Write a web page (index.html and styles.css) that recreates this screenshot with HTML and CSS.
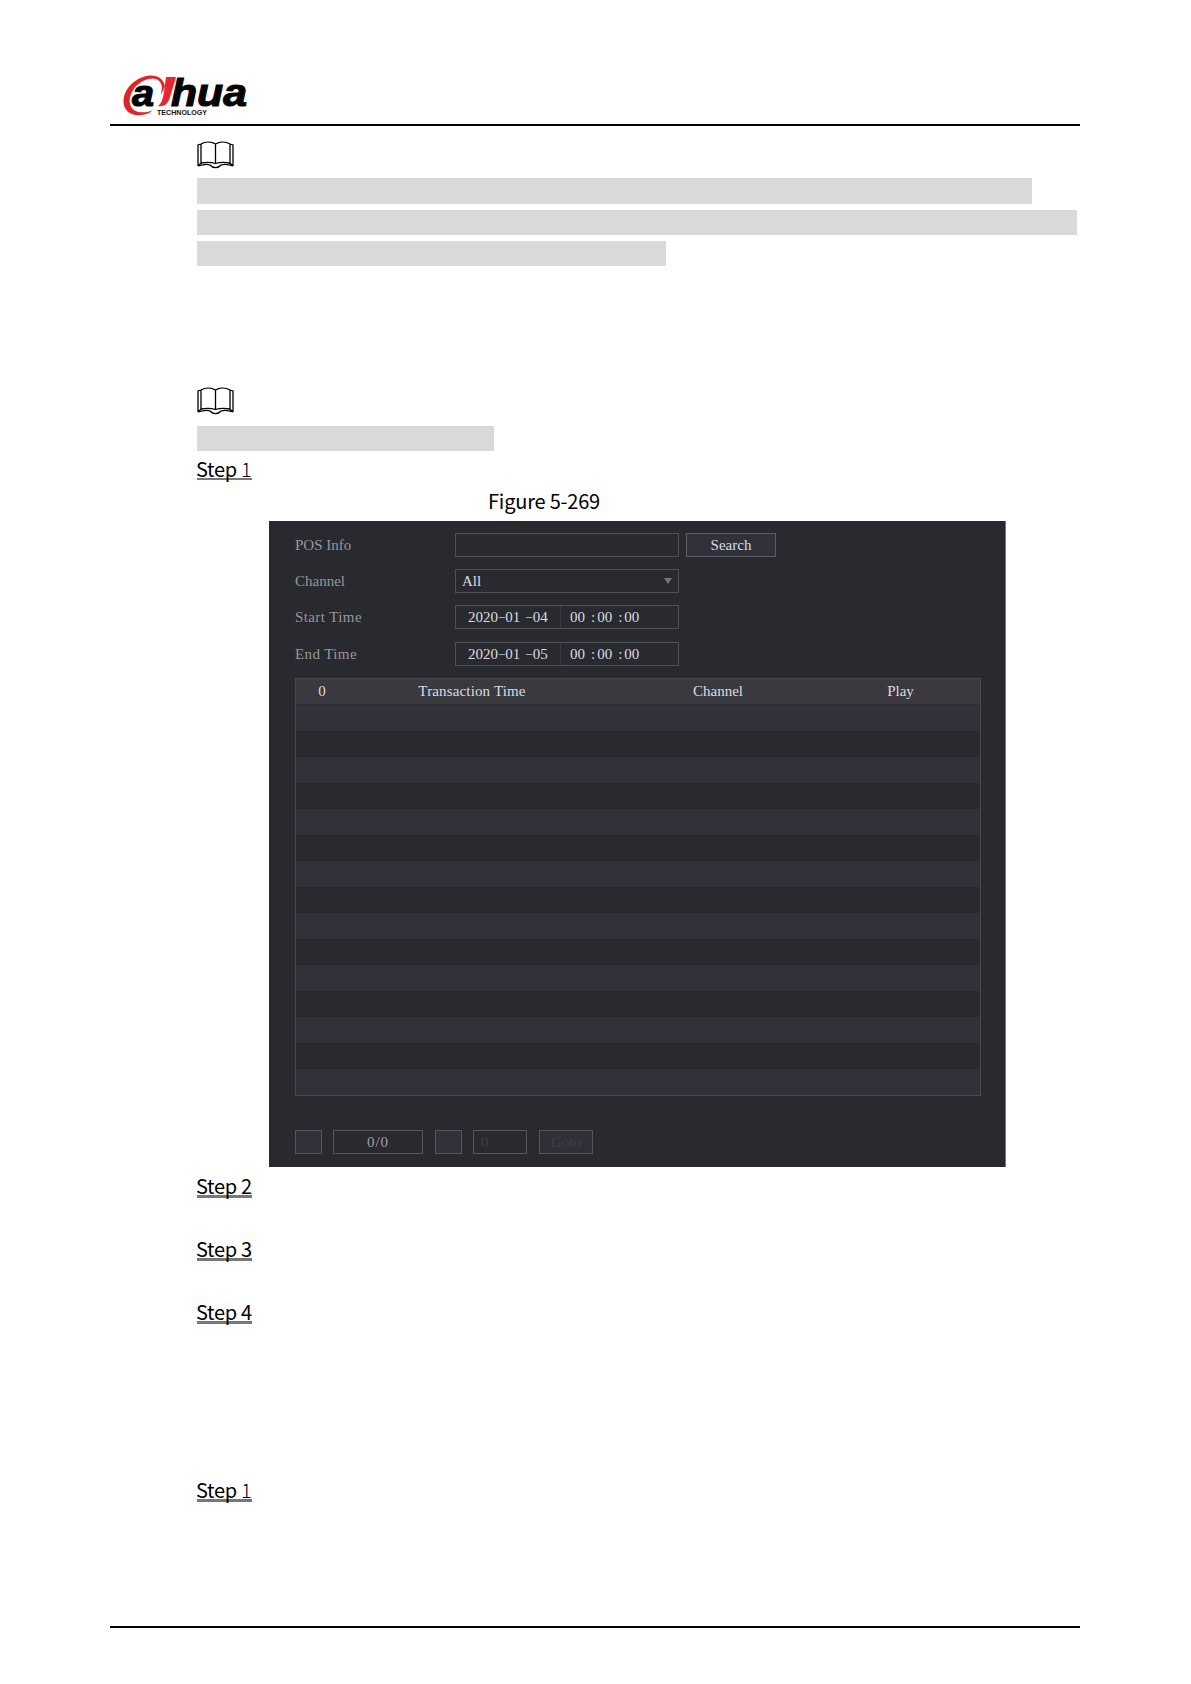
FILE: index.html
```
<!DOCTYPE html>
<html lang="en">
<head>
    <meta charset="UTF-8">
    <meta name="viewport" content="width=device-width, initial-scale=1.0">
    <title>POS Search</title>
    <link rel="stylesheet" href="styles.css">
</head>
<body>

    <header class="page-header">
        <svg class="logo" width="134" height="46" viewBox="0 0 134 46">
            <path d="M43 14 C41 5 32 1 21 5 C9 9 1 20 1.500 30 C2 40 10 44 19 43 C24 42.500 28 41 30.500 38.500 C21 42 10 41 8 32 C6 21 15 10 26 7 C34 5 39 8 40 15 L39 23 Z" fill="#e02229"/>
            <path d="M44 5 H54 L48 25 C46 32 42 35 36 34 C40 31 41 26 42 20 Z" fill="#e8262c"/>
            <text class="logo-a" x="10" y="33.500" textLength="22" lengthAdjust="spacingAndGlyphs">a</text>
            <text class="logo-hua" x="49" y="33.500" textLength="76" lengthAdjust="spacingAndGlyphs">hua</text>
            <text class="logo-sub" x="35" y="43" textLength="50" lengthAdjust="spacingAndGlyphs">TECHNOLOGY</text>
        </svg>
    </header>

    <main class="content">
        <svg class="book" width="37" height="28" viewBox="0 0 37 28">
            <path d="M1 25 V4 L4 3 C9 0 15 1 18.500 3 C22 1 28 0 33 3 L36 4 V25 M4 3 V23 M18.500 3 V22 M33 3 V23 M1 25 L4 22 C9 21 14 21 18.500 22.500 C23 21 28 21 33 22 L36 25 M1 25 C7 23 11 23 13 24 C16 27.500 21 27.500 24 24 C27 23 31 23 36 25"/>
        </svg>
        <div class="note-lines">
            <div class="bar bar-first"></div>
            <div class="bar bar-full"></div>
            <div class="bar bar-half"></div>
        </div>

        <svg class="book book-second" width="37" height="28" viewBox="0 0 37 28">
            <path d="M1 25 V4 L4 3 C9 0 15 1 18.500 3 C22 1 28 0 33 3 L36 4 V25 M4 3 V23 M18.500 3 V22 M33 3 V23 M1 25 L4 22 C9 21 14 21 18.500 22.500 C23 21 28 21 33 22 L36 25 M1 25 C7 23 11 23 13 24 C16 27.500 21 27.500 24 24 C27 23 31 23 36 25"/>
        </svg>
        <div class="bar bar-short"></div>

        <div class="step"><span>Step <i>1</i></span></div>
        <div class="figure-title">Figure 5-269</div>

        <!-- POS search window -->
        <section class="panel">
            <div class="row">
                <label>POS Info</label>
                <div class="field"></div>
                <div class="search-btn">Search</div>
            </div>
            <div class="row">
                <label>Channel</label>
                <div class="field select">All
                    <svg width="8" height="6" viewBox="0 0 8 6"><path d="M0 0H8L4 6Z" fill="#74757b"/></svg>
                </div>
            </div>
            <div class="row">
                <label class="wide">Start Time</label>
                <div class="field time">
                    <span class="date">2020<b>−</b>01<b class="gap">−</b>04</span>
                    <span class="clock">00<b>:</b>00<b>:</b>00</span>
                </div>
            </div>
            <div class="row">
                <label class="wide">End Time</label>
                <div class="field time">
                    <span class="date">2020<b>−</b>01<b class="gap">−</b>05</span>
                    <span class="clock">00<b>:</b>00<b>:</b>00</span>
                </div>
            </div>

            <div class="table">
                <div class="table-head">
                    <span class="col-num">0</span>
                    <span class="col-time">Transaction Time</span>
                    <span class="col-channel">Channel</span>
                    <span class="col-play">Play</span>
                </div>
                <div class="table-body">
                    <div></div><div></div><div></div><div></div><div></div>
                    <div></div><div></div><div></div><div></div><div></div>
                    <div></div><div></div><div></div><div></div><div></div>
                </div>
            </div>

            <div class="pager">
                <div class="box small"></div>
                <div class="box count">0/0</div>
                <div class="box small next"></div>
                <div class="box page">0</div>
                <div class="box go">Goto</div>
            </div>
        </section>

        <div class="steps">
            <div class="step"><span>Step 2</span></div>
            <div class="step"><span>Step 3</span></div>
            <div class="step"><span>Step 4</span></div>
            <div class="step step-next"><span>Step <i>1</i></span></div>
        </div>
    </main>

    <footer class="page-footer"></footer>

</body>
</html>
```
FILE: styles.css
```
* {
    box-sizing: border-box;
}

body {
    margin: 0;
    width: 1191px;
    height: 1684px;
    background: #fff;
    color: #000;
    font-family: "Noto Sans CJK SC", "Open Sans", sans-serif;
    overflow: hidden;
    display: flex;
    flex-direction: column;
}

.page-header {
    margin: 0 111px 0 110px;
    height: 126px;
    padding: 72px 0 0 12px;
    border-bottom: 2px solid #000;
}

.logo {
    display: block;
    overflow: visible;
}

.logo-a, .logo-hua {
    font: italic bold 37px "Liberation Sans", Arial, sans-serif;
    fill: #050505;
    stroke: #050505;
    stroke-width: 1.2px;
}

.logo-hua {
    font-size: 39px;
}

.logo-sub {
    font: bold 6.5px "Liberation Sans", Arial, sans-serif;
    fill: #111;
}

.content {
    margin-left: 197px;
    padding-top: 15px;
    flex: 1;
}

.book {
    display: block;
    fill: none;
    stroke: #000;
    stroke-width: 1.3px;
}

.book-second {
    margin: 121px 0 11px;
}

.bar {
    height: 25px;
    background: #d9d9d9;
}

.note-lines {
    display: flex;
    flex-direction: column;
    gap: 6px;
    margin-top: 9px;
}

.bar-first {
    width: 835px;
    height: 26px;
}

.bar-full {
    width: 880px;
}

.bar-half {
    width: 469px;
}

.bar-short {
    width: 297px;
}

.step {
    height: 30px;
    font-size: 20px;
    line-height: 30px;
    letter-spacing: -0.3px;
    margin-top: 3px;
}

.step span {
    display: block;
    width: 55px;
    height: 26px;
    white-space: nowrap;
    text-indent: -1px;
    border-bottom: 2px solid #777;
}

.step i {
    font-style: normal;
    font-weight: 300;
}

.figure-title {
    margin: 2px 0 5px 291px;
    font-size: 20px;
    line-height: 30px;
    letter-spacing: -0.2px;
}

/* panel */
.panel {
    width: 737px;
    height: 646px;
    margin-left: 72px;
    padding: 12px 24px 0 26px;
    background: #292a2f;
    border-right: 1px solid #77787a;
    color: #dcdce0;
    font: 15px/25px "Liberation Serif", "Times New Roman", serif;
}

.row {
    display: flex;
    height: 24px;
    margin-bottom: 12px;
}

.row label {
    width: 160px;
    color: #96979c;
}

.row label.wide {
    letter-spacing: 0.4px;
}

.field {
    width: 224px;
    border: 1px solid #505157;
    line-height: 23px;
}

.select {
    display: flex;
    justify-content: space-between;
    align-items: center;
    padding: 0 6px;
}

.search-btn {
    width: 90px;
    margin-left: 7px;
    border: 1px solid #5c5c69;
    background: #31313b;
    line-height: 23px;
    text-align: center;
}

.row:nth-child(3) {
    margin-bottom: 13px;
}

.time {
    display: flex;
}

.time b {
    font-weight: normal;
}

.date {
    width: 105px;
    padding-left: 12px;
    border-right: 1px solid #3b3c42;
    white-space: nowrap;
}

.date b {
    font-size: 13px;
}

.date .gap {
    margin-left: 5px;
}

.clock {
    padding-left: 9px;
}

.clock b {
    margin: 0 2px 0 6px;
}

.table {
    height: 418px;
    border: 1px solid #494a50;
    display: flex;
    flex-direction: column;
}

.table-head {
    display: flex;
    height: 26px;
    background: #39393f;
    border-bottom: 1px solid #2c2c32;
    line-height: 25px;
    text-align: center;
}

.col-num {
    width: 52px;
}

.col-time {
    width: 248px;
    letter-spacing: 0.15px;
}

.col-channel {
    width: 244px;
}

.col-play {
    width: 121px;
}

.table-body {
    flex: 1;
    display: flex;
    flex-direction: column;
}

.table-body div {
    flex: 1;
}

.table-body div:nth-child(odd) {
    background: #313139;
}

.pager {
    display: flex;
    margin-top: 34px;
}

.box {
    height: 24px;
    border: 1px solid #55565c;
    line-height: 23px;
    text-align: center;
}

.small {
    width: 27px;
    background: #31313b;
}

.count {
    width: 90px;
    margin: 0 12px 0 11px;
    color: #a0a0a5;
    letter-spacing: 1px;
}

.page {
    width: 54px;
    margin: 0 12px 0 11px;
    padding-left: 7px;
    text-align: left;
    color: #3d3e43;
}

.go {
    width: 54px;
    background: #2f3037;
    color: #3d3e44;
}

.steps .step {
    margin: 4px 0 33px;
}

.steps .step span {
    height: 27px;
    border-bottom-width: 3px;
}

.steps .step-next {
    margin-top: 148px;
}

.page-footer {
    margin: 0 111px 56px 110px;
    border-top: 2px solid #000;
}
```
